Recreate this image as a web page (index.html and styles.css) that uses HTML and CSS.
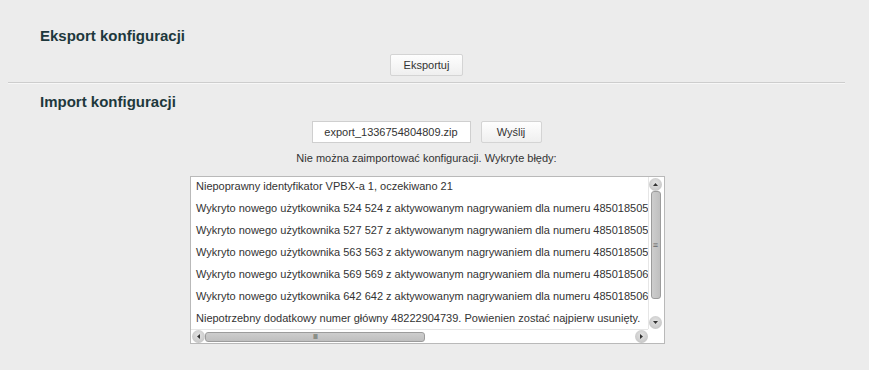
FILE: index.html
```html
<!DOCTYPE html>
<html lang="pl">
<head>
  <meta charset="UTF-8" />
  <title>Konfiguracja</title>
  <link rel="stylesheet" href="styles.css">
</head>
<body>
  <div class="page">
    <h2 class="section-title">Eksport konfiguracji</h2>
    <div class="row export-row">
      <button type="button" class="btn">Eksportuj</button>
    </div>

    <hr class="divider">

    <h2 class="section-title">Import konfiguracji</h2>
    <form class="row import-row">
      <div class="file-box">export_1336754804809.zip</div>
      <button type="button" class="btn btn-send">Wyślij</button>
    </form>
    <p class="message">Nie można zaimportować konfiguracji. Wykryte błędy:</p>

    <div class="log">
      <div class="log-body">
        <div class="log-line">Niepoprawny identyfikator VPBX-a 1, oczekiwano 21</div>
        <div class="log-line">Wykryto nowego użytkownika 524 524 z aktywowanym nagrywaniem dla numeru 4850185052</div>
        <div class="log-line">Wykryto nowego użytkownika 527 527 z aktywowanym nagrywaniem dla numeru 4850185052</div>
        <div class="log-line">Wykryto nowego użytkownika 563 563 z aktywowanym nagrywaniem dla numeru 4850185058</div>
        <div class="log-line">Wykryto nowego użytkownika 569 569 z aktywowanym nagrywaniem dla numeru 4850185061</div>
        <div class="log-line">Wykryto nowego użytkownika 642 642 z aktywowanym nagrywaniem dla numeru 4850185064</div>
        <div class="log-line">Niepotrzebny dodatkowy numer główny 48222904739. Powienien zostać najpierw usunięty.</div>
      </div>

      <div class="vscroll">
        <span class="arrow">
          <svg width="13" height="13" viewBox="0 0 13 13"><polygon points="4,8 9,8 6.5,5" fill="#333"/></svg>
        </span>
        <div class="vthumb"><span class="grip-v">&#8801;</span></div>
        <div class="vtrack"></div>
        <span class="arrow">
          <svg width="13" height="13" viewBox="0 0 13 13"><polygon points="4,5 9,5 6.5,8" fill="#333"/></svg>
        </span>
      </div>

      <div class="hscroll">
        <span class="arrow">
          <svg width="13" height="13" viewBox="0 0 13 13"><polygon points="8,4 8,9 5,6.5" fill="#333"/></svg>
        </span>
        <div class="hthumb"><span class="grip-h">IIII</span></div>
        <div class="htrack"></div>
        <span class="arrow">
          <svg width="13" height="13" viewBox="0 0 13 13"><polygon points="5,4 5,9 8,6.5" fill="#333"/></svg>
        </span>
      </div>
      <div class="corner"></div>
    </div>
  </div>
</body>
</html>
```

FILE: styles.css
```css
body {
  margin: 0;
  background-color: #ececec;
  font-family: "Liberation Sans", Arial, sans-serif;
  color: #333;
}

.page {
  width: 853px;
  padding-top: 27px;
}

.section-title {
  margin: 0 0 0 40px;
  font-size: 15px;
  line-height: 18px;
  font-weight: bold;
  color: #1e383c;
}

.row {
  display: flex;
  justify-content: center;
  gap: 10px;
}

.export-row {
  margin-top: 9px;
}

.import-row {
  margin: 10px 0 0;
}

.btn {
  height: 22px;
  padding: 0;
  border: 1px solid #d4d4d4;
  border-radius: 2px;
  background: linear-gradient(#fefefe, #efefef);
  font-family: "Liberation Sans", Arial, sans-serif;
  font-size: 11px;
  color: #333;
  width: 73px;
}

.btn-send {
  width: 61px;
}

.divider {
  margin: 6px 8px 9px;
  height: 0;
  border: none;
  border-top: 1px solid #cdcdcd;
  border-bottom: 1px solid #f7f7f7;
}

.file-box {
  width: 159px;
  height: 22px;
  box-sizing: border-box;
  border: 1px solid #cfcfcf;
  background-color: #fff;
  font-size: 11px;
  line-height: 20px;
  text-align: center;
}

.message {
  margin: 8px 0 0;
  font-size: 11px;
  line-height: 14px;
  text-align: center;
}

.log {
  display: grid;
  grid-template-columns: 457px 14px;
  grid-template-rows: 152px 14px;
  width: 473px;
  margin: 11px 0 0 190px;
  border: 1px solid #b9b9b9;
  background-color: #fff;
}

.log-body {
  overflow: hidden;
  padding-left: 5px;
  white-space: nowrap;
}

.log-line {
  height: 22px;
  font-size: 11px;
  line-height: 18px;
}

.arrow {
  display: block;
  width: 13px;
  height: 13px;
  border-radius: 50%;
  background: radial-gradient(circle at 50% 40%, #e4e4e4, #bdbdbd);
  flex: none;
}

.arrow svg {
  display: block;
}

.vscroll {
  display: flex;
  flex-direction: column;
  align-items: center;
  border-left: 1px solid #e6e6e6;
  padding-top: 1px;
}

.vthumb {
  width: 10px;
  height: 108px;
  box-sizing: border-box;
  border: 1px solid #9c9c9c;
  border-radius: 3px;
  background: linear-gradient(to right, #cdcdcd, #bfbfbf);
  display: flex;
  align-items: center;
  justify-content: center;
}

.grip-v {
  font-size: 9px;
  line-height: 9px;
  color: #666;
}

.vtrack {
  flex: 1;
}

.hscroll {
  display: flex;
  align-items: center;
  padding-left: 1px;
  border-top: 1px solid #e6e6e6;
}

.hthumb {
  width: 220px;
  height: 10px;
  box-sizing: border-box;
  border: 1px solid #9c9c9c;
  border-radius: 3px;
  background: linear-gradient(#cdcdcd, #bfbfbf);
  display: flex;
  align-items: center;
  justify-content: center;
}

.grip-h {
  font-size: 7px;
  line-height: 7px;
  color: #666;
  letter-spacing: -1px;
}

.htrack {
  flex: 1;
}

.corner {
  background-color: #fff;
}
```
